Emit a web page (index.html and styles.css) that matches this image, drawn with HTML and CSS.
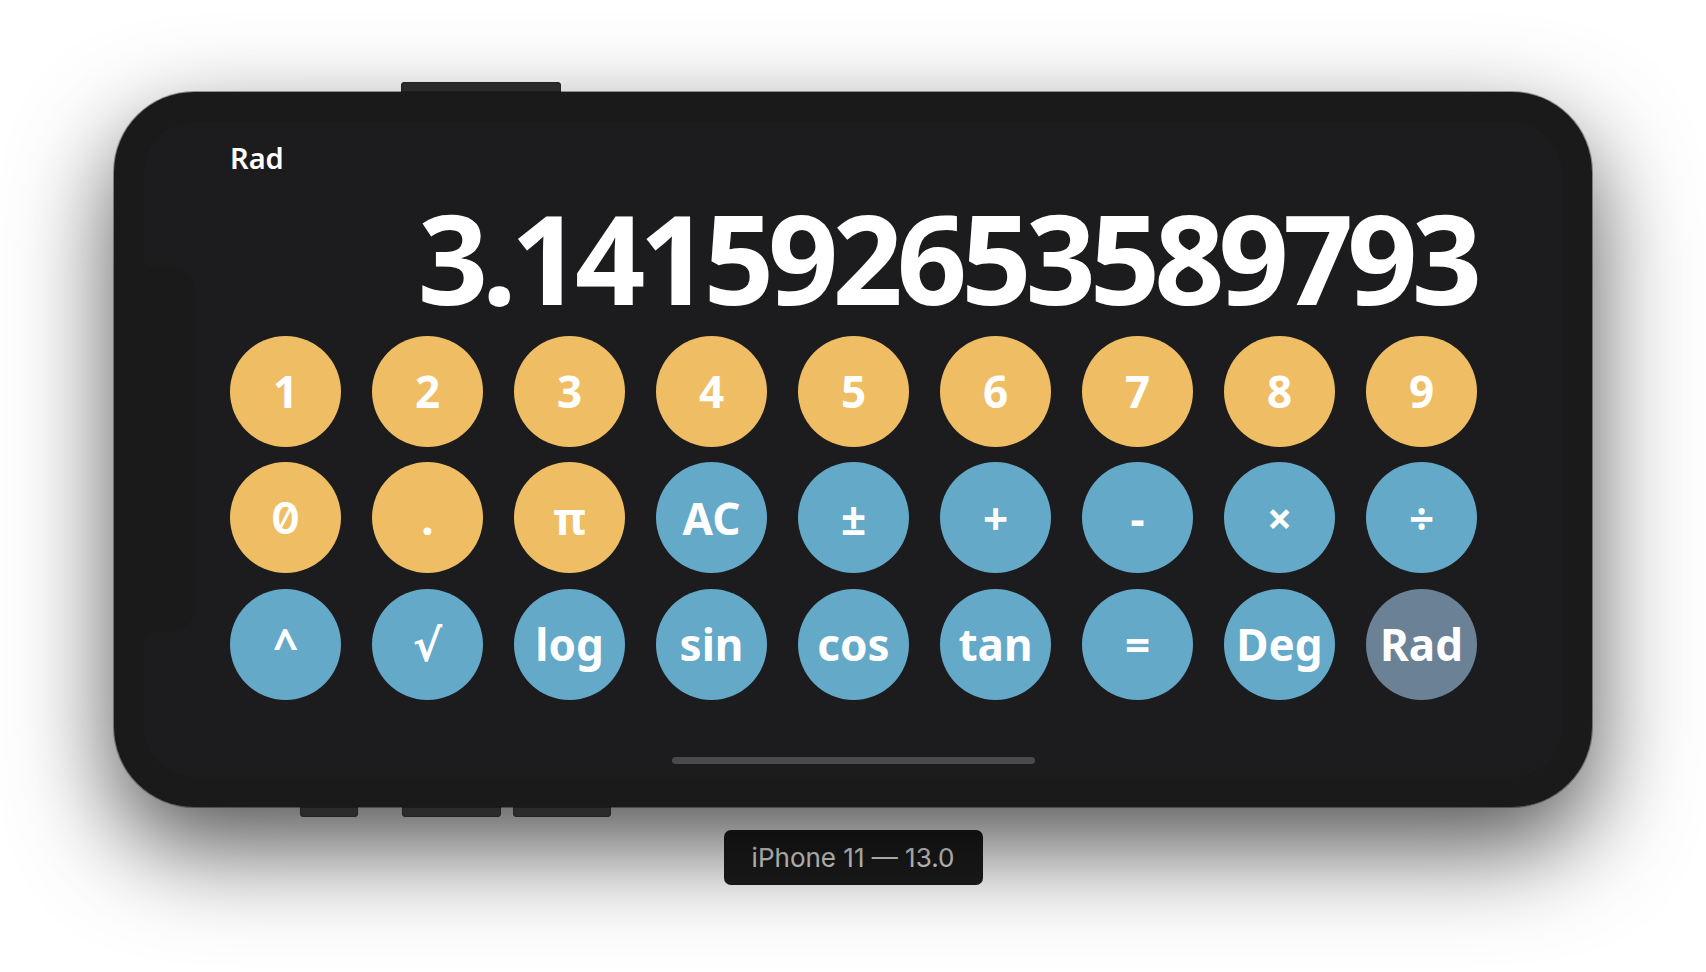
FILE: index.html
```html
<!DOCTYPE html>
<html lang="en">
<head>
<meta charset="utf-8">
<title>Calculator</title>
<link rel="stylesheet" href="styles.css">
</head>
<body>
<div class="stage">
  <div class="device">
    <span class="hw hw-top"></span>
    <span class="hw hw-b1"></span>
    <span class="hw hw-b2"></span>
    <span class="hw hw-b3"></span>
    <div class="phone">
      <div class="screen">
        <div class="mode">Rad</div>
        <div class="display">3.141592653589793</div>
        <div class="keys">
          <button class="key num">1</button>
          <button class="key num">2</button>
          <button class="key num">3</button>
          <button class="key num">4</button>
          <button class="key num">5</button>
          <button class="key num">6</button>
          <button class="key num">7</button>
          <button class="key num">8</button>
          <button class="key num">9</button>
          <button class="key num zero">0</button>
          <button class="key num">.</button>
          <button class="key num">π</button>
          <button class="key op">AC</button>
          <button class="key op">±</button>
          <button class="key op">+</button>
          <button class="key op">-</button>
          <button class="key op">×</button>
          <button class="key op">÷</button>
          <button class="key op">^</button>
          <button class="key op">√</button>
          <button class="key op">log</button>
          <button class="key op">sin</button>
          <button class="key op">cos</button>
          <button class="key op">tan</button>
          <button class="key op">=</button>
          <button class="key op">Deg</button>
          <button class="key active">Rad</button>
        </div>
        <div class="home"></div>
      </div>
      <div class="notch"></div>
    </div>
  </div>
  <div class="caption">iPhone 11 — 13.0</div>
</div>
</body>
</html>
```
FILE: styles.css
```css
html, body {
  margin: 0;
  background: #ffffff;
  font-family: "Noto Sans", "DejaVu Sans", sans-serif;
}

.stage {
  box-sizing: border-box;
  min-height: 972px;
  display: flex;
  flex-direction: column;
  align-items: center;
  padding-top: 92px;
}

.device {
  position: relative;
  width: 1478px;
  height: 715px;
  border-radius: 80px;
  box-shadow: 0 40px 100px rgba(0, 0, 0, 0.68);
}

.hw {
  position: absolute;
  z-index: 1;
  height: 16px;
  background: #2b2b2d;
  border-radius: 4px;
  box-shadow: inset 0 0 0 1px #232325;
}

.hw-top { left: 287px; top: -10px; width: 160px; }
.hw-b1 { left: 186px; bottom: -10px; width: 58px; }
.hw-b2 { left: 288px; bottom: -10px; width: 99px; }
.hw-b3 { left: 399px; bottom: -10px; width: 98px; }

.phone {
  position: relative;
  z-index: 2;
  box-sizing: border-box;
  width: 1478px;
  height: 715px;
  padding: 30px;
  background: #1a1a1b;
  border-radius: 80px;
  box-shadow: 0 0 0 1px rgba(0, 0, 0, 0.35);
}

.screen {
  box-sizing: border-box;
  height: 655px;
  padding: 21px 86px 13px;
  background: #1c1c1e;
  border-radius: 50px;
  display: flex;
  flex-direction: column;
  color: #ffffff;
}

.mode {
  font-size: 29px;
  font-weight: 600;
  line-height: 29px;
}

.display {
  margin-top: 23.6px;
  font-size: 123px;
  font-weight: 700;
  line-height: 123px;
  letter-spacing: -6px;
  text-align: right;
  white-space: nowrap;
}

.keys {
  margin-top: 17.4px;
  display: grid;
  grid-template-columns: repeat(9, 111px);
  column-gap: 31px;
  row-gap: 15.5px;
}

.key {
  width: 111px;
  height: 111px;
  padding: 0;
  border: none;
  border-radius: 50%;
  display: flex;
  align-items: center;
  justify-content: center;
  color: #ffffff;
  font-family: "Noto Sans", "DejaVu Sans", sans-serif;
  font-size: 44px;
  font-weight: 700;
  line-height: 1;
}

.num { background: #efbe64; }
.op { background: #64a9c8; }
.active { background: #6a8196; }

.zero {
  font-family: "Inter", "Noto Sans", sans-serif;
  font-feature-settings: "zero" 1;
  font-weight: 600;
}

.home {
  align-self: center;
  margin-top: auto;
  width: 363px;
  height: 7px;
  border-radius: 4px;
  background: #4a4a4c;
}

.notch {
  position: absolute;
  left: 0;
  top: 175px;
  width: 82px;
  height: 365px;
  background: #1a1a1b;
  border-radius: 0 27px 27px 0;
}

.notch::before,
.notch::after {
  content: "";
  position: absolute;
  left: 30px;
  width: 8px;
  height: 8px;
}

.notch::before {
  top: -8px;
  background: radial-gradient(circle at 100% 0, #1c1c1e 7.5px, #1a1a1b 8px);
}

.notch::after {
  top: 100%;
  background: radial-gradient(circle at 100% 100%, #1c1c1e 7.5px, #1a1a1b 8px);
}

.caption {
  margin-top: 23px;
  box-sizing: border-box;
  width: 259px;
  height: 55px;
  background: #1c1c1c;
  border-radius: 7px;
  display: flex;
  align-items: center;
  justify-content: center;
  font-family: "Inter", "Liberation Sans", sans-serif;
  font-size: 26px;
  color: #e8e8e8;
}
```
